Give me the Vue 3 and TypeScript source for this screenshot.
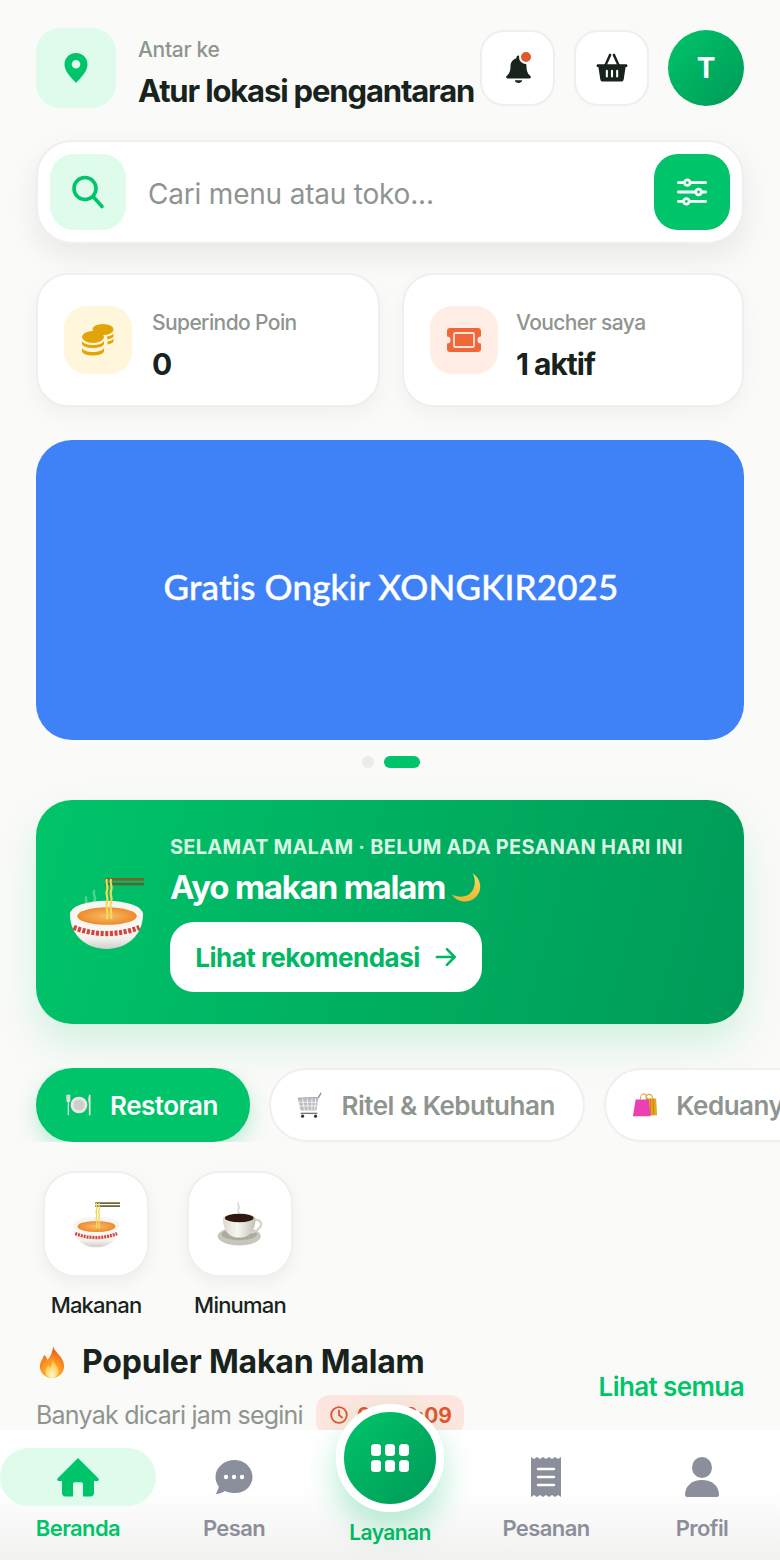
<script setup lang="ts">
const pills = [
  { label: 'Restoran', icon: 'plate', active: true },
  { label: 'Ritel & Kebutuhan', icon: 'cart', active: false },
  { label: 'Keduanya', icon: 'bags', active: false },
]
const cats = [
  { label: 'Makanan', icon: 'noodle' },
  { label: 'Minuman', icon: 'coffee' },
]
</script>

<template>
  <div class="app">
    <svg class="defs" width="0" height="0" aria-hidden="true">
      <defs>
        <linearGradient id="bowlG" x1="0" y1="0" x2="0" y2="1"><stop offset="0" stop-color="#fff"/><stop offset=".7" stop-color="#f2f1ed"/><stop offset="1" stop-color="#cfcfca"/></linearGradient>
        <radialGradient id="soupG"><stop offset="0" stop-color="#f7bd68"/><stop offset="1" stop-color="#ee8a2c"/></radialGradient>
        <radialGradient id="flameG" cx=".5" cy=".9" r=".95"><stop offset="0" stop-color="#ffd23c"/><stop offset=".55" stop-color="#f98a1e"/><stop offset="1" stop-color="#e83a17"/></radialGradient>
        <radialGradient id="coreG" cx=".5" cy=".85" r=".7"><stop offset="0" stop-color="#fff6c8"/><stop offset="1" stop-color="#fdc43a"/></radialGradient>
        <linearGradient id="cupG" x1="0" y1="0" x2="1" y2="0"><stop offset="0" stop-color="#dcd9d1"/><stop offset=".45" stop-color="#f8f6f1"/><stop offset="1" stop-color="#c4c0b7"/></linearGradient>
        <linearGradient id="moonG" x1="0" y1="0" x2="0" y2="1"><stop offset="0" stop-color="#f8d968"/><stop offset="1" stop-color="#eeb72f"/></linearGradient>
        <symbol id="noodle" viewBox="0 0 72 72">
          <path d="M24 14c-3 4 2 6 0 10s1 4 0 8M16 20c-2 3 1 5 0 8" stroke="#fff" stroke-opacity=".3" stroke-width="2.500" fill="none"/>
          <path d="M0 37c0 21 16 34 35.500 34S71 58 71 37z" fill="url(#bowlG)"/>
          <ellipse cx="35.500" cy="37" rx="35.500" ry="13" fill="#f6f5f1"/>
          <ellipse cx="36" cy="39" rx="29" ry="8.500" fill="url(#soupG)"/>
          <rect x="34" y="2" width="38" height="2.600" fill="#7a6128"/>
          <rect x="34" y="6.500" width="38" height="2.600" fill="#4f6a30"/>
          <path d="M36 3c-2 4 2 7 0 11s2 7 0 11 2 8 0 17M40 3c-2 4 2 7 0 11s2 7 0 11 1 8 0 17" stroke="#f2da5d" stroke-width="2.200" fill="none"/>
          <path d="M3.500 50c20 8 44 8 64 0" stroke="#d3453c" stroke-width="5" stroke-dasharray="3 1.500" fill="none"/>
        </symbol>
        <symbol id="coffee" viewBox="0 0 72 72">
          <path d="M33 2c-3 4 3 6 0 10s2 5 0 7" stroke="#cfcfcf" stroke-width="3" fill="none" opacity=".7"/>
          <ellipse cx="34" cy="54" rx="33" ry="14" fill="#c9c5bb"/>
          <ellipse cx="34" cy="51" rx="27" ry="9" fill="#aeaa9f"/>
          <path d="M54 30c12-4 16 4 12 10s-10 8-16 8" stroke="#d6d3cb" stroke-width="3.500" fill="none"/>
          <path d="M9 27c0-5 11-8 25-8s25 3 25 8c0 13-6 29-25 29S9 40 9 27z" fill="url(#cupG)"/>
          <ellipse cx="34" cy="26" rx="22" ry="6.500" fill="#30190f"/>
        </symbol>
        <symbol id="plate" viewBox="0 0 28 28">
          <circle cx="14" cy="14" r="9" fill="#e9e9e4"/><circle cx="14" cy="14" r="6" fill="#cfcfc9"/>
          <path d="M2.500 3v22M1 3v6c0 2 3 2 3 0V3" stroke="#e6e6e6" stroke-width="1.300" fill="none"/>
          <path d="M25.500 3v22" stroke="#e6e6e6" stroke-width="1.800"/><path d="M25.500 3c-2 3-2 8 0 10" fill="#e6e6e6"/>
        </symbol>
        <symbol id="cart" viewBox="0 0 28 28">
          <path d="M1 7l22-1 3-5" stroke="#8f9296" stroke-width="1.500" fill="none"/>
          <path d="M1 7l3 13h17l2-14z" fill="#b9bcc0"/>
          <path d="M6 7l2 13M11 7l1 13M16 7l0 13M20 7l-1 13M2 11h20M3 15h19" stroke="#fff" stroke-width=".8"/>
          <path d="M4 23h18" stroke="#777" stroke-width="1.500"/>
          <circle cx="6" cy="26" r="1.700" fill="#333"/><circle cx="20" cy="26" r="1.700" fill="#333"/>
        </symbol>
        <symbol id="bags" viewBox="0 0 28 28">
          <path d="M9 8c0-8 7-8 7 0M15 7c0-6 7-6 7 0" stroke="#e8a33c" stroke-width="1.200" fill="none"/>
          <path d="M15 7h11l1 18H16z" fill="#e6a51f"/><path d="M17 7v18M20 7v18M23 7v18" stroke="#c77f1b" stroke-width="1"/>
          <path d="M4 8h14l2 18H1z" fill="#ec3fb0"/>
        </symbol>
      </defs>
    </svg>

    <main class="scroll">
      <header class="top">
        <div class="loc-icon">
          <svg width="26" height="32" viewBox="0 0 26 32"><path fill="#00c46a" d="M13 1C6 1 1.500 6.300 1.500 12.500 1.500 20 9.500 27 13 31c3.500-4 11.500-11 11.500-18.500C24.500 6.300 20 1 13 1zm0 15.500a4.300 4.300 0 1 1 0-8.600 4.300 4.300 0 0 1 0 8.600z"/></svg>
        </div>
        <div class="loc-text">
          <div class="loc-small">Antar ke</div>
          <div class="loc-title">Atur lokasi pengantaran</div>
        </div>
        <button class="sq">
          <svg class="bell" width="27" height="30" viewBox="0 0 28 32"><path fill="#17231c" d="M14 1.500c-1.300 0-2.200 1-2.200 2.200v.8C7.700 5.600 5.500 9 5.500 13c0 6-2 8.500-4.200 10.500-.9.800-.4 2.500 1 2.500h23.400c1.400 0 1.900-1.700 1-2.500C24.500 21.500 22.500 19 22.500 13c0-4-2.200-7.400-6.300-8.500v-.8c0-1.200-.9-2.200-2.200-2.200zM10 28c.4 1.900 2 3 4 3s3.600-1.100 4-3z"/></svg>
          <span class="dot-red"></span>
        </button>
        <button class="sq">
          <svg width="34" height="30" viewBox="0 0 34 32"><path fill="none" stroke="#17231c" stroke-width="2.600" stroke-linecap="round" d="M10 13 15 2M24 13 19 2"/><path fill="#17231c" d="M2 12h30c1 0 1.500.7 1.500 1.500S33 15 32 15h-.5l-2 13c-.2 1.500-1.300 2.500-2.800 2.500H7.300c-1.500 0-2.600-1-2.800-2.500l-2-13H2C1 15 .5 14.300.5 13.500S1 12 2 12z"/><path stroke="#fff" stroke-width="2.200" stroke-linecap="round" d="M11.500 19v6M17 19v6M22.500 19v6"/></svg>
        </button>
        <div class="avatar">T</div>
      </header>

      <section class="search">
        <div class="search-icon">
          <svg width="36" height="36" viewBox="0 0 36 36" fill="none" stroke="#00c46a" stroke-width="3.600" stroke-linecap="round"><circle cx="15" cy="14.500" r="11"/><path d="M23.500 23 32 32.500"/></svg>
        </div>
        <span class="placeholder">Cari menu atau toko...</span>
        <button class="filter">
          <svg width="30" height="28" viewBox="0 0 32 28" fill="none" stroke="#fff" stroke-width="3" stroke-linecap="round"><path d="M1.500 4h29M1.500 14h29M1.500 24h29"/><circle cx="11" cy="4" r="3" fill="#00c46a"/><circle cx="23" cy="14" r="3" fill="#00c46a"/><circle cx="10" cy="24" r="3" fill="#00c46a"/></svg>
        </button>
      </section>

      <section class="stats">
        <div class="stat">
          <div class="stat-icon yellow">
            <svg width="32" height="32" viewBox="0 0 32 32" fill="#e2a507">
              <ellipse cx="21" cy="5.500" rx="10.500" ry="5.500"/><path d="M25 12.500c3-.5 5.500-1.500 6.500-3v3c-.6 1.300-3 2.500-6 3zM25.500 17.500c3-.5 5-1.500 6-3v3c-.6 1.300-3 2.500-6 3z"/>
              <ellipse cx="11" cy="13" rx="11" ry="6"/>
              <path d="M0 17c1.500 2.600 6 4 11 4s9.500-1.400 11-4v3c-1 2.600-6 4-11 4S1 22.600 0 20zM0 24c1.500 2.600 6 4 11 4s9.500-1.400 11-4v3.500c-1 2.600-6 4-11 4s-10-1.400-11-4z"/>
            </svg>
          </div>
          <div class="stat-text">
            <div class="stat-label">Superindo Poin</div>
            <div class="stat-value">0</div>
          </div>
        </div>
        <div class="stat">
          <div class="stat-icon red">
            <svg width="34" height="24" viewBox="0 0 34 24"><path fill="#f2673a" d="M3 0h28c1.700 0 3 1.300 3 3v5.500a3.500 3.500 0 0 0 0 7V21c0 1.700-1.300 3-3 3H3c-1.700 0-3-1.300-3-3v-5.500a3.500 3.500 0 0 0 0-7V3c0-1.700 1.300-3 3-3z"/><rect x="7" y="5" width="20" height="14" rx="1.500" fill="none" stroke="#ffe3d6" stroke-width="1.800"/></svg>
          </div>
          <div class="stat-text">
            <div class="stat-label">Voucher saya</div>
            <div class="stat-value">1 aktif</div>
          </div>
        </div>
      </section>

      <section class="banner">Gratis Ongkir XONGKIR2025</section>
      <div class="dots"><span class="d"></span><span class="d on"></span></div>

      <section class="hero">
        <svg class="hero-emoji"><use href="#noodle"/></svg>
        <div class="hero-body">
          <div class="hero-small">SELAMAT MALAM · BELUM ADA PESANAN HARI INI</div>
          <div class="hero-title">Ayo makan malam
            <svg class="moon" width="33" height="31" viewBox="0 0 33 33"><path fill="url(#moonG)" d="M23 1c4 8 3 18-4 23-5 3-12 3-18 0 5 8 16 10 24 4 9-7 8-20-2-27z"/></svg>
          </div>
          <button class="hero-btn">
            <span>Lihat rekomendasi</span>
            <svg width="22" height="22" viewBox="0 0 24 22" fill="none" stroke="#00b863" stroke-width="2.800" stroke-linecap="round" stroke-linejoin="round"><path d="M2 11h19M13 2.500l8.500 8.500-8.500 8.500"/></svg>
          </button>
        </div>
      </section>

      <nav class="pills">
        <button v-for="p in pills" :key="p.label" class="pill" :class="{ active: p.active }">
          <svg class="pill-emoji"><use :href="'#' + p.icon"/></svg>
          <span>{{ p.label }}</span>
        </button>
      </nav>

      <section class="cats">
        <div v-for="c in cats" :key="c.label" class="cat">
          <div class="cat-box"><svg class="cat-emoji"><use :href="'#' + c.icon"/></svg></div>
          <div class="cat-label">{{ c.label }}</div>
        </div>
      </section>

      <section class="popular">
        <div>
          <h2 class="pop-title">
            <svg class="fire" width="28" height="32" viewBox="0 0 28 32"><path fill="url(#flameG)" d="M15 0c1 6 10 10 11 19 .8 7-5 13-12 13S1 26 2 19c.5-4 3-6 4-10 2 1 3 3 3.500 5C12 11 15 6 15 0z"/><path fill="url(#coreG)" d="M14.500 13c1 4 6 8 6 12 0 4-3 7-6.500 7s-7-3-6.500-7c.3-2 2-3.500 2.500-5.500 1 .5 1.500 1.500 2 2.500 1.500-2 2.700-5.500 2.500-9z"/></svg>
            Populer Makan Malam
          </h2>
          <div class="pop-sub">
            <span>Banyak dicari jam segini</span>
            <span class="timer">
              <svg width="18" height="18" viewBox="0 0 18 18" fill="none" stroke="#e0562f" stroke-width="1.800" stroke-linecap="round"><circle cx="9" cy="9" r="7.800"/><path d="M9 4.500V9l3 2.500"/></svg>
              02:58:09
            </span>
          </div>
        </div>
        <a class="see-all">Lihat semua</a>
      </section>
    </main>

    <footer class="tabbar">
      <div class="tab active">
        <div class="tab-pill">
          <svg width="44" height="40" viewBox="0 0 44 40"><path fill="#00c46a" d="M22 1 1.500 21.500c-.8 1 0 2.500 1.200 2.500H6v12c0 2 1.500 3.500 3.500 3.500H17V27c0-1 .7-1.700 1.700-1.700h6.600c1 0 1.700.7 1.700 1.700v12.500h7.500c2 0 3.500-1.500 3.500-3.500V24h3.300c1.200 0 2-1.500 1.200-2.500z"/></svg>
        </div>
        <span>Beranda</span>
      </div>
      <div class="tab">
        <div class="tab-pill">
          <svg width="40" height="36" viewBox="0 0 40 36"><path fill="#8b8f9b" d="M21 1C10 1 1.500 8.500 1.500 18c0 3.500 1.200 6.800 3.200 9.500-.3 2.500-1.300 5-3.200 7.500 4 0 7.500-1.500 9.500-3 3 1.500 6.500 2 10 2 10.500 0 17.500-7.500 17.500-16S31.500 1 21 1z"/><circle cx="12" cy="18" r="2.200" fill="#fff"/><circle cx="20" cy="18" r="2.200" fill="#fff"/><circle cx="28" cy="18" r="2.200" fill="#fff"/></svg>
        </div>
        <span>Pesan</span>
      </div>
      <div class="tab center"><span>Layanan</span></div>
      <div class="tab">
        <div class="tab-pill">
          <svg width="30" height="40" viewBox="0 0 30 40"><path fill="#8b8f9b" d="M0 0l3 2 3-2 3 2 3-2 3 2 3-2 3 2 3-2 3 2 3-2v40l-3-2-3 2-3-2-3 2-3-2-3 2-3-2-3 2-3-2-3 2z"/><path stroke="#fff" stroke-width="2.400" stroke-linecap="round" d="M7 12h16M7 20h16M7 28h16"/></svg>
        </div>
        <span>Pesanan</span>
      </div>
      <div class="tab">
        <div class="tab-pill">
          <svg width="34" height="40" viewBox="0 0 34 40" fill="#8b8f9b"><ellipse cx="17" cy="10.500" rx="10" ry="10.500"/><path d="M0 38c0-9 7-15 17-15s17 6 17 15c0 1-1 2-2 2H2c-1 0-2-1-2-2z"/></svg>
        </div>
        <span>Profil</span>
      </div>
      <button class="fab">
        <svg width="38" height="28" viewBox="0 0 38 28" fill="#fff">
          <rect x="0" y="0" width="10" height="12" rx="3.500"/><rect x="14" y="0" width="10" height="12" rx="3.500"/><rect x="28" y="0" width="10" height="12" rx="3.500"/>
          <rect x="0" y="16" width="10" height="12" rx="3.500"/><rect x="14" y="16" width="10" height="12" rx="3.500"/><rect x="28" y="16" width="10" height="12" rx="3.500"/>
        </svg>
      </button>
    </footer>
  </div>
</template>

<style>
html, body { margin: 0; background: #fafaf8; }
</style>

<style scoped>
* { box-sizing: border-box; }
button { font: inherit; padding: 0; cursor: pointer; }
.app {
  position: relative;
  width: 780px;
  height: 1560px;
  overflow: hidden;
  background: #fafaf8;
  color: #17231c;
  font-family: Inter, "Noto Sans", sans-serif;
}
.defs { position: absolute; }
.scroll { padding-top: 28px; }

.top { display: flex; align-items: center; height: 80px; padding: 0 36px; }
.loc-icon {
  width: 80px; height: 80px; border-radius: 24px; background: #dffbec;
  display: flex; align-items: center; justify-content: center; flex: none;
}
.loc-text { margin-left: 22px; padding-top: 10px; width: 342px; flex: none; white-space: nowrap; }
.loc-small { font-size: 21px; font-weight: 500; color: #8e958f; letter-spacing: -0.3px; line-height: 26px; margin-bottom: 10px; }
.loc-title { font-size: 31px; font-weight: 700; letter-spacing: -1.15px; line-height: 36px; }
.sq {
  position: relative; width: 75px; height: 76px; border-radius: 24px; background: #fff;
  border: 2px solid #efefed; display: flex; align-items: center; justify-content: center; flex: none;
}
.sq + .sq { margin-left: 19px; }
.bell { margin-top: 2px; margin-left: 2px; }
.dot-red { position: absolute; top: 18px; right: 20px; width: 14px; height: 14px; border-radius: 50%; background: #e3592c; border: 2px solid #fff; }
.avatar {
  margin-left: 19px; width: 76px; height: 76px; border-radius: 50%;
  background: linear-gradient(135deg, #00c46a, #009a58); color: #fff;
  font-size: 28px; font-weight: 700; display: flex; align-items: center; justify-content: center;
}

.search {
  margin: 32px 36px 0; height: 104px; background: #fff; border: 2px solid #efefed; border-radius: 36px;
  box-shadow: 0 12px 28px rgba(23, 35, 28, .08);
  display: flex; align-items: center; padding: 0 12px;
}
.search-icon {
  width: 76px; height: 76px; border-radius: 24px; background: #dffbec;
  display: flex; align-items: center; justify-content: center; flex: none;
}
.placeholder { margin-left: 22px; padding-top: 4px; flex: 1; font-size: 28px; color: #8e958f; letter-spacing: -0.2px; }
.filter {
  width: 76px; height: 76px; border-radius: 24px; background: #00c46a; border: 0;
  display: flex; align-items: center; justify-content: center; flex: none;
}

.stats { margin: 29px 36px 0; display: grid; grid-template-columns: 344px 342px; gap: 22px; }
.stat {
  height: 134px; background: #fff; border: 2px solid #efefed; border-radius: 32px;
  box-shadow: 0 8px 20px rgba(23, 35, 28, .04);
  display: flex; align-items: center; padding: 0 26px; gap: 20px;
}
.stat + .stat { gap: 18px; }
.stat-icon { width: 68px; height: 68px; border-radius: 22px; display: flex; align-items: center; justify-content: center; flex: none; }
.stat-icon.yellow { background: #fff6dc; }
.stat-icon.red { background: #ffede6; }
.stat-text { padding-top: 10px; }
.stat-label { font-size: 21px; font-weight: 500; color: #8e958f; letter-spacing: -0.6px; line-height: 26px; margin-bottom: 11px; }
.stat-value { font-size: 30px; font-weight: 700; letter-spacing: -1px; line-height: 34px; }

.banner {
  margin: 33px 36px 0; height: 300px; border-radius: 36px; background: #3f82f8; color: #fff;
  display: flex; align-items: center; justify-content: center; padding: 0 0 9px 2px;
  font-family: Lato, sans-serif; font-size: 35px; font-weight: 500; letter-spacing: .1px;
  -webkit-text-stroke: .4px #fff;
}
.dots { display: flex; justify-content: center; gap: 10px; margin-top: 16px; height: 12px; padding-left: 2px; }
.d { width: 12px; height: 12px; border-radius: 6px; background: #ebebe9; }
.d.on { width: 36px; background: #00c46a; }

.hero {
  margin: 32px 36px 0; height: 224px; border-radius: 36px;
  background: linear-gradient(105deg, #00c46a, #009a58);
  box-shadow: 0 20px 40px rgba(0, 196, 106, .16);
  display: flex; align-items: flex-start; padding-left: 34px; gap: 26px;
}
.hero-emoji { width: 74px; height: 74px; flex: none; margin-top: 76px; }
.hero-body { margin-top: 34px; }
.hero-small { font-size: 20px; font-weight: 700; color: #d6f5e3; letter-spacing: .27px; line-height: 26px; white-space: nowrap; }
.hero-title { display: flex; align-items: center; gap: 5px; font-size: 33px; font-weight: 700; color: #fff; letter-spacing: -1.2px; line-height: 44px; margin-top: 5px; white-space: nowrap; }
.hero-btn {
  margin-top: 13px; width: 312px; height: 70px; border: 0; border-radius: 24px; background: #fff;
  display: flex; align-items: center; justify-content: center; gap: 15px;
  font-size: 26px; font-weight: 700; color: #00b863; letter-spacing: -.5px;
}

.pills { display: flex; gap: 19.5px; margin-top: 44px; padding-left: 36px; height: 74px; overflow: hidden; }
.pill {
  display: flex; align-items: center; gap: 18px; height: 74px; padding: 0 28px 0 26px; border-radius: 37px;
  background: #fff; border: 2px solid #efefed; font-size: 26px; font-weight: 600; color: #8e958f;
  letter-spacing: -.5px; flex: none; white-space: nowrap;
}
.pill.active { padding: 0 30px 0 28px; background: #00c46a; border-color: #00c46a; color: #fff; box-shadow: 0 8px 20px rgba(0, 196, 106, .25); }
.pill-emoji { width: 26px; height: 26px; flex: none; }

.cats { display: flex; gap: 24px; margin-top: 29px; padding-left: 36px; }
.cat { width: 120px; display: flex; flex-direction: column; align-items: center; }
.cat-box {
  width: 106px; height: 106px; border-radius: 32px; background: #fff; border: 2px solid #efefed;
  box-shadow: 0 6px 16px rgba(23, 35, 28, .05);
  display: flex; align-items: center; justify-content: center;
}
.cat-emoji { width: 47px; height: 47px; }
.cat-label { margin-top: 15px; font-size: 22px; font-weight: 500; letter-spacing: -0.8px; line-height: 26px; white-space: nowrap; }

.popular { display: flex; justify-content: space-between; margin: 24px 36px 0; }
.pop-title { margin: 0; display: flex; align-items: center; gap: 16px; font-size: 32px; font-weight: 700; letter-spacing: -0.2px; line-height: 40px; white-space: nowrap; color: #17231c; }
.fire { margin-left: 2px; }
.pop-sub { display: flex; align-items: center; gap: 13px; margin-top: 13px; font-size: 25px; color: #8e958f; letter-spacing: -0.77px; white-space: nowrap; }
.timer {
  display: flex; align-items: center; gap: 9px; height: 40px; width: 148px; padding-left: 14px; border-radius: 14px; background: #fde6df;
  color: #e0562f; font-size: 21px; font-weight: 700; letter-spacing: -0.2px;
}
.see-all { align-self: center; margin-top: -4px; font-size: 26px; font-weight: 600; color: #00c46a; letter-spacing: -0.6px; white-space: nowrap; }

.tabbar {
  position: absolute; left: 0; right: 0; bottom: 0; height: 130px;
  background: linear-gradient(180deg, #fff 45%, #f1f1f0 100%);
  display: grid; grid-template-columns: repeat(5, 156px);
}
.tab {
  display: flex; flex-direction: column; align-items: center; padding-top: 18px;
  font-size: 22px; font-weight: 600; color: #8b8f9b; letter-spacing: -0.6px; line-height: 28px;
}
.tab-pill { width: 156px; height: 58px; border-radius: 29px; display: flex; align-items: center; justify-content: center; margin-bottom: 8px; }
.tab.active { color: #00c46a; }
.tab.active .tab-pill { background: #dffbec; }
.tab.center { color: #00b863; padding-top: 89px; font-size: 21px; }
.fab {
  position: absolute; left: 336px; top: -26px; width: 108px; height: 108px; border-radius: 50%;
  border: 8px solid #fff; background: linear-gradient(135deg, #00c46a, #009a58);
  box-shadow: 0 16px 32px rgba(0, 196, 106, .3);
  display: flex; align-items: center; justify-content: center;
}
</style>
